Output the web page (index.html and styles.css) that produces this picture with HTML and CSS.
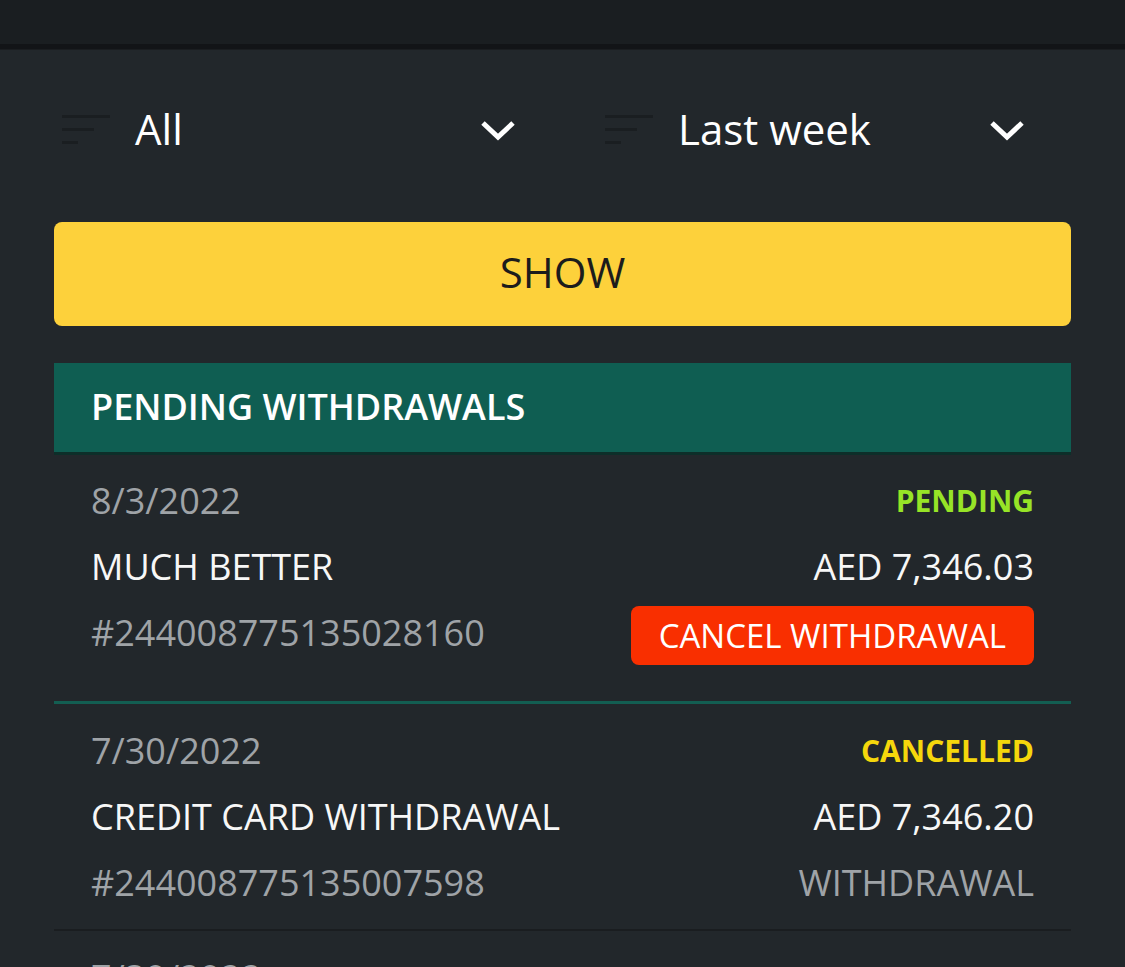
FILE: index.html
```html
<!DOCTYPE html>
<html>
<head>
<meta charset="utf-8">
<link rel="stylesheet" href="styles.css">
</head>
<body>
<div class="topbar"></div>
<div class="strip"></div>
<main class="page">
  <div class="filters">
    <div class="select select-left">
      <svg class="filter-icon" width="48" height="32" viewBox="0 0 48 32"><rect x="0" y="2" width="48" height="3"/><rect x="0" y="15" width="32" height="3"/><rect x="0" y="28" width="16" height="3"/></svg>
      <span class="select-label">All</span>
      <svg class="chev" width="36" height="24" viewBox="0 0 36 24"><path d="M3 5 L18 19 L33 5" fill="none" stroke="#fff" stroke-width="5"/></svg>
    </div>
    <div class="select select-right">
      <svg class="filter-icon" width="48" height="32" viewBox="0 0 48 32"><rect x="0" y="2" width="48" height="3"/><rect x="0" y="15" width="32" height="3"/><rect x="0" y="28" width="16" height="3"/></svg>
      <span class="select-label">Last week</span>
      <svg class="chev" width="36" height="24" viewBox="0 0 36 24"><path d="M3 5 L18 19 L33 5" fill="none" stroke="#fff" stroke-width="5"/></svg>
    </div>
  </div>
  <button class="show-btn">SHOW</button>
  <section class="list">
    <div class="list-header">PENDING WITHDRAWALS</div>
    <div class="row row-pending">
      <div class="line"><span class="muted">8/3/2022</span><span class="status pending">PENDING</span></div>
      <div class="line"><span>MUCH BETTER</span><span>AED 7,346.03</span></div>
      <div class="line"><span class="muted">#244008775135028160</span><button class="cancel-btn">CANCEL WITHDRAWAL</button></div>
    </div>
    <div class="row">
      <div class="line"><span class="muted">7/30/2022</span><span class="status cancelled">CANCELLED</span></div>
      <div class="line"><span>CREDIT CARD WITHDRAWAL</span><span>AED 7,346.20</span></div>
      <div class="line"><span class="muted">#244008775135007598</span><span class="muted">WITHDRAWAL</span></div>
    </div>
    <div class="row">
      <div class="line"><span class="muted">7/30/2022</span><span></span></div>
    </div>
  </section>
</main>
</body>
</html>
```
FILE: styles.css
```css
* { box-sizing: border-box; }
html, body {
  margin: 0;
  padding: 0;
  background: #22272b;
  font-family: "Open Sans", "Liberation Sans", sans-serif;
  color: #f7f7f7;
  overflow: hidden;
}
.topbar { height: 44px; background: #1a1e21; }
.strip { height: 6px; background: #121417; border-bottom: 1px solid #1a1d20; }
.page { padding: 0 54px; }
.filters {
  display: grid;
  grid-template-columns: 486px 1fr;
  column-gap: 58px;
  height: 157px;
  align-items: center;
}
.select {
  display: flex;
  align-items: center;
  height: 60px;
}
.select-left { padding: 0 24px 0 8px; }
.select-right { padding: 0 46px 0 7px; }
.filter-icon { fill: #1a1e21; flex: none; }
.select-label {
  flex: 1;
  font-size: 42px;
  line-height: 60px;
  margin-left: 25px;
  color: #fff;
}
.chev { flex: none; margin-top: 2px; }
.show-btn {
  display: block;
  width: 100%;
  height: 104px;
  margin-top: 15px;
  border: none;
  border-radius: 8px;
  background: #fdd13b;
  color: #1c1c1c;
  font-family: "Open Sans", "Liberation Sans", sans-serif;
  font-size: 42px;
  line-height: 100px;
  padding: 0 0 4px;
}
.list { margin-top: 37px; }
.list-header {
  height: 92px;
  background: #0f5e52;
  border-bottom: 3px solid #0d2e29;
  padding-left: 37px;
  font-size: 36px;
  font-weight: 600;
  line-height: 88px;
  color: #fff;
}
.row {
  padding: 13px 37px 14px;
  border-bottom: 2px solid #1a1d20;
}
.row-pending {
  padding-top: 12px;
  padding-bottom: 36px;
  border-bottom: 3px solid #135e52;
}
.line {
  display: flex;
  justify-content: space-between;
  align-items: center;
  height: 66px;
  font-size: 36px;
}
.muted { color: #9fa3a7; }
.status { font-weight: 700; font-size: 30px; }
.pending { color: #97e427; }
.cancelled { color: #f5d70c; }
.cancel-btn {
  height: 59px;
  padding: 0 28px;
  border: none;
  border-radius: 8px;
  background: #f92f00;
  color: #fff;
  font-family: "Open Sans", "Liberation Sans", sans-serif;
  font-size: 33px;
  margin-top: 6px;
}
```
